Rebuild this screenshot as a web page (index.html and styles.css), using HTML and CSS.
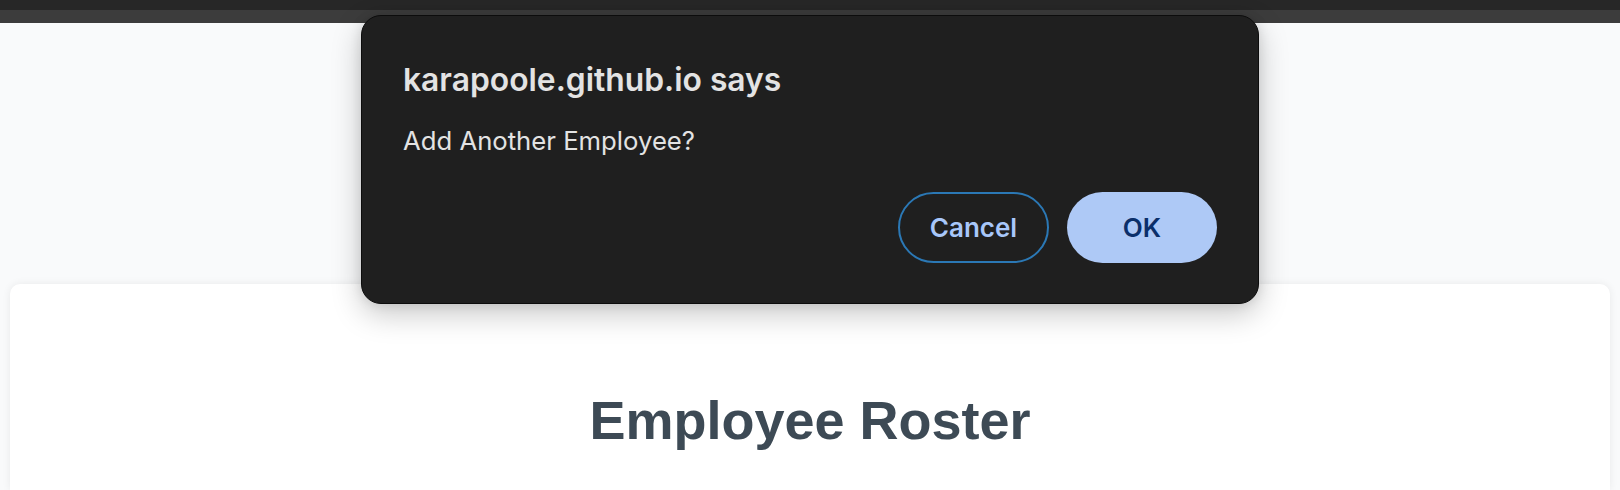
FILE: index.html
```html
<!DOCTYPE html>
<html lang="en">
<head>
<meta charset="utf-8">
<title>Employee Roster</title>
<link rel="stylesheet" href="styles.css">
</head>
<body>
  <div class="chrome">
    <div class="chrome-top"></div>
    <div class="chrome-strip"></div>
  </div>
  <main class="page">
    <section class="card">
      <h1 class="roster-title">Employee Roster</h1>
    </section>
  </main>
  <div class="dialog" role="dialog">
    <div class="dialog-title">karapoole.github.io says</div>
    <div class="dialog-message">Add Another Employee?</div>
    <div class="dialog-actions">
      <button class="btn btn-cancel">Cancel</button>
      <button class="btn btn-ok">OK</button>
    </div>
  </div>
</body>
</html>
```
FILE: styles.css
```css
html, body {
  margin: 0;
  padding: 0;
}
body {
  width: 1620px;
  height: 490px;
  overflow: hidden;
  background: #f9fafb;
  font-family: Inter, "Noto Sans", sans-serif;
  position: relative;
}
.chrome-top {
  height: 10px;
  background: #272727;
}
.chrome-strip {
  height: 13px;
  background: #3c3c3c;
}
.page {
  padding: 261px 10px 0;
}
.card {
  background: #ffffff;
  border-radius: 10px 10px 0 0;
  box-shadow: 0 0 8px rgba(0, 0, 0, 0.07);
  padding: 105px 0 39px;
}
.roster-title {
  margin: 0;
  text-align: center;
  font-family: "Liberation Sans", Arial, sans-serif;
  font-weight: 700;
  font-size: 54px;
  line-height: 62px;
  color: #3d4a55;
}
.dialog {
  position: absolute;
  top: 15px;
  left: calc(50% - 449px);
  width: 898px;
  height: 289px;
  box-sizing: border-box;
  background: #1f1f1f;
  border: 1px solid #0c0c0c;
  border-radius: 20px;
  box-shadow: 0 10px 30px rgba(0, 0, 0, 0.22), 0 0 12px rgba(0, 0, 0, 0.1);
  padding: 45px 41px 0 41px;
  display: flex;
  flex-direction: column;
}
.dialog-title {
  font-size: 31.8px;
  line-height: 38px;
  font-weight: 600;
  color: #e3e3e3;
}
.dialog-message {
  margin-top: 26px;
  font-size: 25.7px;
  line-height: 32px;
  font-weight: 400;
  color: #e3e3e3;
}
.dialog-actions {
  margin-top: 35px;
  display: flex;
  justify-content: flex-end;
  gap: 18px;
}
.btn {
  height: 71px;
  width: 151px;
  border-radius: 36px;
  font-family: Inter, "Noto Sans", sans-serif;
  font-size: 26px;
  font-weight: 600;
  box-sizing: border-box;
  cursor: pointer;
}
.btn-cancel {
  background: transparent;
  border: 2px solid #2b78b5;
  color: #a8c7fa;
}
.btn-ok {
  width: 150px;
  background: #aec9f6;
  border: none;
  color: #0b2f6a;
}
```
